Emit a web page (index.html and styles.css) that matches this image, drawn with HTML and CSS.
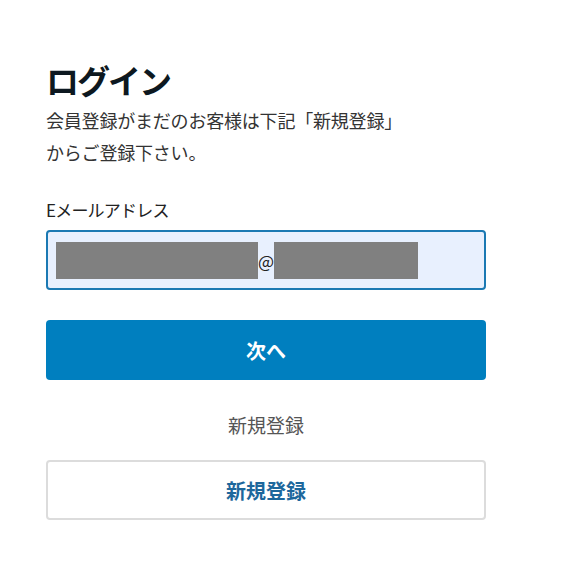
FILE: index.html
```html
<!DOCTYPE html>
<html lang="ja">
<head>
  <meta charset="UTF-8">
  <title>ログイン</title>
  <link rel="stylesheet" href="styles.css">
</head>
<body>
  <div class="container">
    <h1>ログイン</h1>
    <p class="lead">会員登録がまだのお客様は下記「新規登録」<br>からご登録下さい。</p>

    <!-- Email form -->
    <form class="login-form" autocomplete="off">
      <label class="field-label">Eメールアドレス</label>
      <div class="email-box">
        <span class="mask mask-user"></span><span class="at">@</span><span class="mask mask-domain"></span>
      </div>
      <button type="button" class="next-btn">次へ</button>
    </form>

    <!-- Sign up -->
    <p class="signup-text">新規登録</p>
    <button type="button" class="signup-btn">新規登録</button>
  </div>
</body>
</html>
```

FILE: styles.css
```css
/* Global Reset */
* {
  box-sizing: border-box;
  margin: 0;
  padding: 0;
}
body {
  font-family: "Noto Sans CJK JP", "Noto Sans", sans-serif;
  background-color: #fff;
  color: #333;
}

.container {
  width: 440px;
  margin-left: 46px;
  padding-top: 60px;
}

/* Headings */
h1 {
  font-size: 33px;
  line-height: 40px;
  font-weight: bold;
  color: #0d1820;
  letter-spacing: -2px;
  margin-bottom: 4px;
}
.lead {
  font-size: 18px;
  line-height: 32px;
  color: #333;
  letter-spacing: -0.2px;
}

/* Form */
.login-form {
  display: flex;
  flex-direction: column;
  margin-top: 30px;
}
.field-label {
  font-size: 17px;
  line-height: 24px;
  color: #222;
  letter-spacing: -0.8px;
  margin-bottom: 8px;
}
.email-box {
  display: flex;
  align-items: center;
  height: 60px;
  padding-left: 8px;
  background-color: #e8f0fe;
  border: 2px solid #1b79b3;
  border-radius: 4px;
}
.mask {
  display: inline-block;
  height: 37px;
  background-color: #808080;
}
.mask-user {
  width: 202px;
}
.mask-domain {
  width: 144px;
}
.at {
  width: 16px;
  font-size: 17px;
  color: #222;
  text-align: center;
}

/* Buttons */
.next-btn {
  margin-top: 30px;
  height: 60px;
  border: none;
  border-radius: 4px;
  background-color: #007fbf;
  color: #fff;
  font-family: inherit;
  font-size: 20px;
  font-weight: bold;
}
.signup-text {
  margin-top: 30px;
  font-size: 19px;
  line-height: 30px;
  color: #555;
  text-align: center;
}
.signup-btn {
  display: block;
  width: 100%;
  margin-top: 20px;
  height: 60px;
  background-color: #fff;
  border: 2px solid #dcdcdc;
  border-radius: 4px;
  color: #1d679c;
  font-family: inherit;
  font-size: 20px;
  font-weight: bold;
}
```
